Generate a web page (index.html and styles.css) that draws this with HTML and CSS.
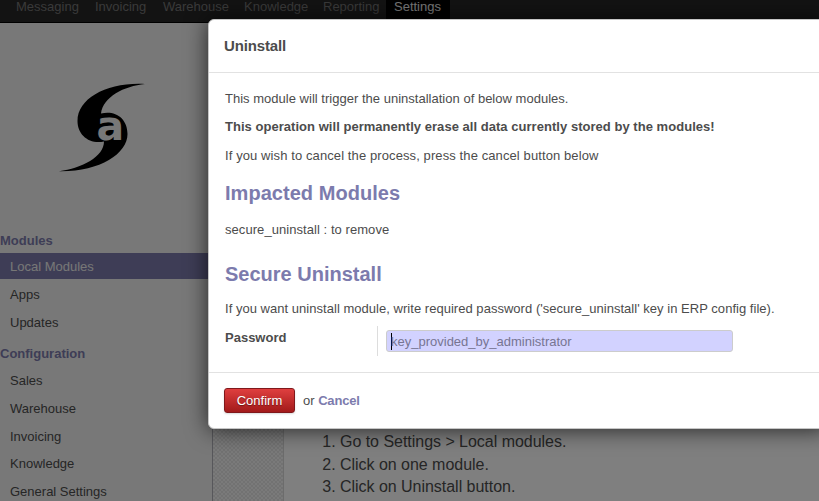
FILE: index.html
```html
<!DOCTYPE html>
<html lang="en">
<head>
<meta charset="utf-8">
<title>Uninstall</title>
<link rel="stylesheet" href="styles.css">
</head>
<body>
<div class="app">
  <nav class="topbar">
    <a class="w-msg">Messaging</a><a class="w-inv">Invoicing</a><a class="w-war">Warehouse</a><a class="w-kno">Knowledge</a><a class="w-rep">Reporting</a><a class="w-set active">Settings</a>
  </nav>
  <div class="columns">
    <aside class="sidebar">
      <svg class="logo" width="110" height="105" viewBox="50 75 110 105">
        <path d="M145 84C124 86 103 97 101 113.500C115 110 127.500 118 127.500 134C127.500 154 99 172 59 171.300C82 168 104 157 104 141.500C89 144.500 77.500 135 77.500 121C77.500 98 108 82 145 84Z" fill="#000"/>
        <text x="96.500" y="140" class="logo-letter">a</text>
      </svg>
      <h4>Modules</h4>
      <ul>
        <li class="active">Local Modules</li>
        <li>Apps</li>
        <li>Updates</li>
      </ul>
      <h4>Configuration</h4>
      <ul class="config">
        <li>Sales</li>
        <li>Warehouse</li>
        <li>Invoicing</li>
        <li>Knowledge</li>
        <li>General Settings</li>
      </ul>
    </aside>
    <div class="gutter"></div>
    <main class="sheet">
      <ol>
        <li>Go to Settings &gt; Local modules.</li>
        <li>Click on one module.</li>
        <li>Click on Uninstall button.</li>
      </ol>
    </main>
  </div>
</div>
<div class="overlay"></div>
<section class="dialog">
  <header><span>Uninstall</span></header>
  <div class="body">
    <p class="intro">This module will trigger the uninstallation of below modules.</p>
    <p class="warn"><b>This operation will permanently erase all data currently stored by the modules!</b></p>
    <p class="hint">If you wish to cancel the process, press the cancel button below</p>
    <h2>Impacted Modules</h2>
    <p class="list">secure_uninstall : to remove</p>
    <h2 class="second">Secure Uninstall</h2>
    <p class="help">If you want uninstall module, write required password ('secure_uninstall' key in ERP config file).</p>
    <div class="field">
      <label>Password</label>
      <div class="cell"><div class="input"><i></i><span>key_provided_by_administrator</span></div></div>
    </div>
  </div>
  <footer><button>Confirm</button><span>or <b>Cancel</b></span></footer>
</section>
</body>
</html>
```

FILE: styles.css
```css
* { box-sizing: border-box; }
body {
  margin: 0;
  height: 501px;
  overflow: hidden;
  position: relative;
  font: 13px/20px "Liberation Sans", Arial, sans-serif;
  color: #4c4c4c;
}
h2, h4, p, ul { margin: 0; padding: 0; }
ul { list-style: none; }
.app { height: 501px; display: flex; flex-direction: column; }
.topbar {
  height: 23px;
  flex: none;
  display: flex;
  padding-left: 8px;
  background: #262626;
  border-bottom: 1px solid #000;
  color: #747474;
  line-height: 14px;
}
.topbar a { padding-left: 8px; white-space: nowrap; }
.w-msg { width: 79px; }
.w-inv { width: 68px; }
.w-war { width: 81px; }
.w-kno { width: 79px; }
.w-rep { width: 71px; }
.w-set { width: 64px; }
.topbar .active { background: #000; color: #eee; }
.columns { flex: 1; display: flex; min-height: 0; }
.sidebar {
  width: 213px;
  flex: none;
  overflow: hidden;
  background: #f0f0f0;
  border-right: 1px solid #afafb6;
}
.logo { display: block; margin: 52px 0 0 50px; }
.logo-letter { font: bold 41px "DejaVu Sans", sans-serif; fill: #f0f0f0; }
.sidebar h4 {
  color: #7c7bad;
  font-size: 13px;
  line-height: 20px;
  margin-top: 51px;
  margin-bottom: 2px;
}
.sidebar li { height: 26px; line-height: 28px; padding-left: 10px; margin-bottom: 2px; }
.sidebar li.active { background: #7c7bad; color: #eee; }
.sidebar ul + h4 { margin: 9px 0 3px; }
.config li { margin-bottom: 1.75px; }
.gutter {
  width: 71px;
  flex: none;
  background: repeating-conic-gradient(#f4f4f4 0 25%, #e4e4e4 0 50%) 0 0 / 4px 4px;
  border-right: 1px solid #d8d8d8;
}
.sheet { flex: 1; background: #fff; }
.sheet ol { margin: 408px 0 0; padding-left: 56px; font-size: 16px; line-height: 22.600px; }
.sheet li { letter-spacing: -.03px; }
.overlay { position: absolute; inset: 0; background: rgba(0, 0, 0, .5); }
.dialog {
  position: absolute;
  left: 208px;
  top: 19px;
  width: 620px;
  height: 410px;
  background: #fff;
  border: 1px solid #c6c6c6;
  border-radius: 6px;
  box-shadow: 0 1px 22px rgba(0, 0, 0, .7);
}
.dialog header {
  height: 53px;
  padding: 16px 15px;
  border-bottom: 1px solid #e2e2e2;
  font-size: 15px;
  font-weight: bold;
  letter-spacing: -.15px;
}
.dialog .body { height: 299px; padding: 16px 16px 0; white-space: nowrap; }
.dialog .intro { letter-spacing: .015px; }
.dialog .warn { margin-top: 8px; letter-spacing: .035px; }
.dialog .hint { margin-top: 9px; letter-spacing: .1px; }
.dialog h2 { color: #7c7bad; font-size: 20px; line-height: 26px; margin-top: 14px; letter-spacing: .04px; }
.dialog .list { margin-top: 14px; letter-spacing: .06px; }
.dialog h2.second { margin-top: 21px; letter-spacing: 0; }
.dialog .help { margin-top: 12px; letter-spacing: .03px; }
.field { display: flex; margin-top: 7px; }
.field label { width: 152px; font-weight: bold; line-height: 24px; }
.cell { height: 30px; border-left: 1px solid #ddd; padding: 4px 0 0 8px; }
.input {
  width: 347px;
  height: 22px;
  display: flex;
  align-items: center;
  padding-left: 4px;
  background: #d2d2ff;
  border: 1px solid #ccc;
  border-radius: 3px;
  color: #777592;
}
.input i { width: 1px; height: 17px; margin-right: -1px; background: #000; }
.input span { padding-top: 2px; }
.dialog footer {
  display: flex;
  align-items: center;
  height: 56px;
  padding-left: 15px;
  border-top: 1px solid #e2e2e2;
}
.dialog button {
  width: 71px;
  height: 25px;
  margin-right: 8px;
  padding: 0;
  border: 1px solid #80181b;
  border-radius: 3px;
  background: linear-gradient(#df3f3f, #a21a1a);
  color: #fff;
  font: 13px/20px "Liberation Sans", Arial, sans-serif;
  text-shadow: 0 1px 1px rgba(0, 0, 0, .4);
  box-shadow: 0 1px 2px rgba(0, 0, 0, .15);
}
.dialog footer b { color: #7c7bad; letter-spacing: -.2px; }
```
